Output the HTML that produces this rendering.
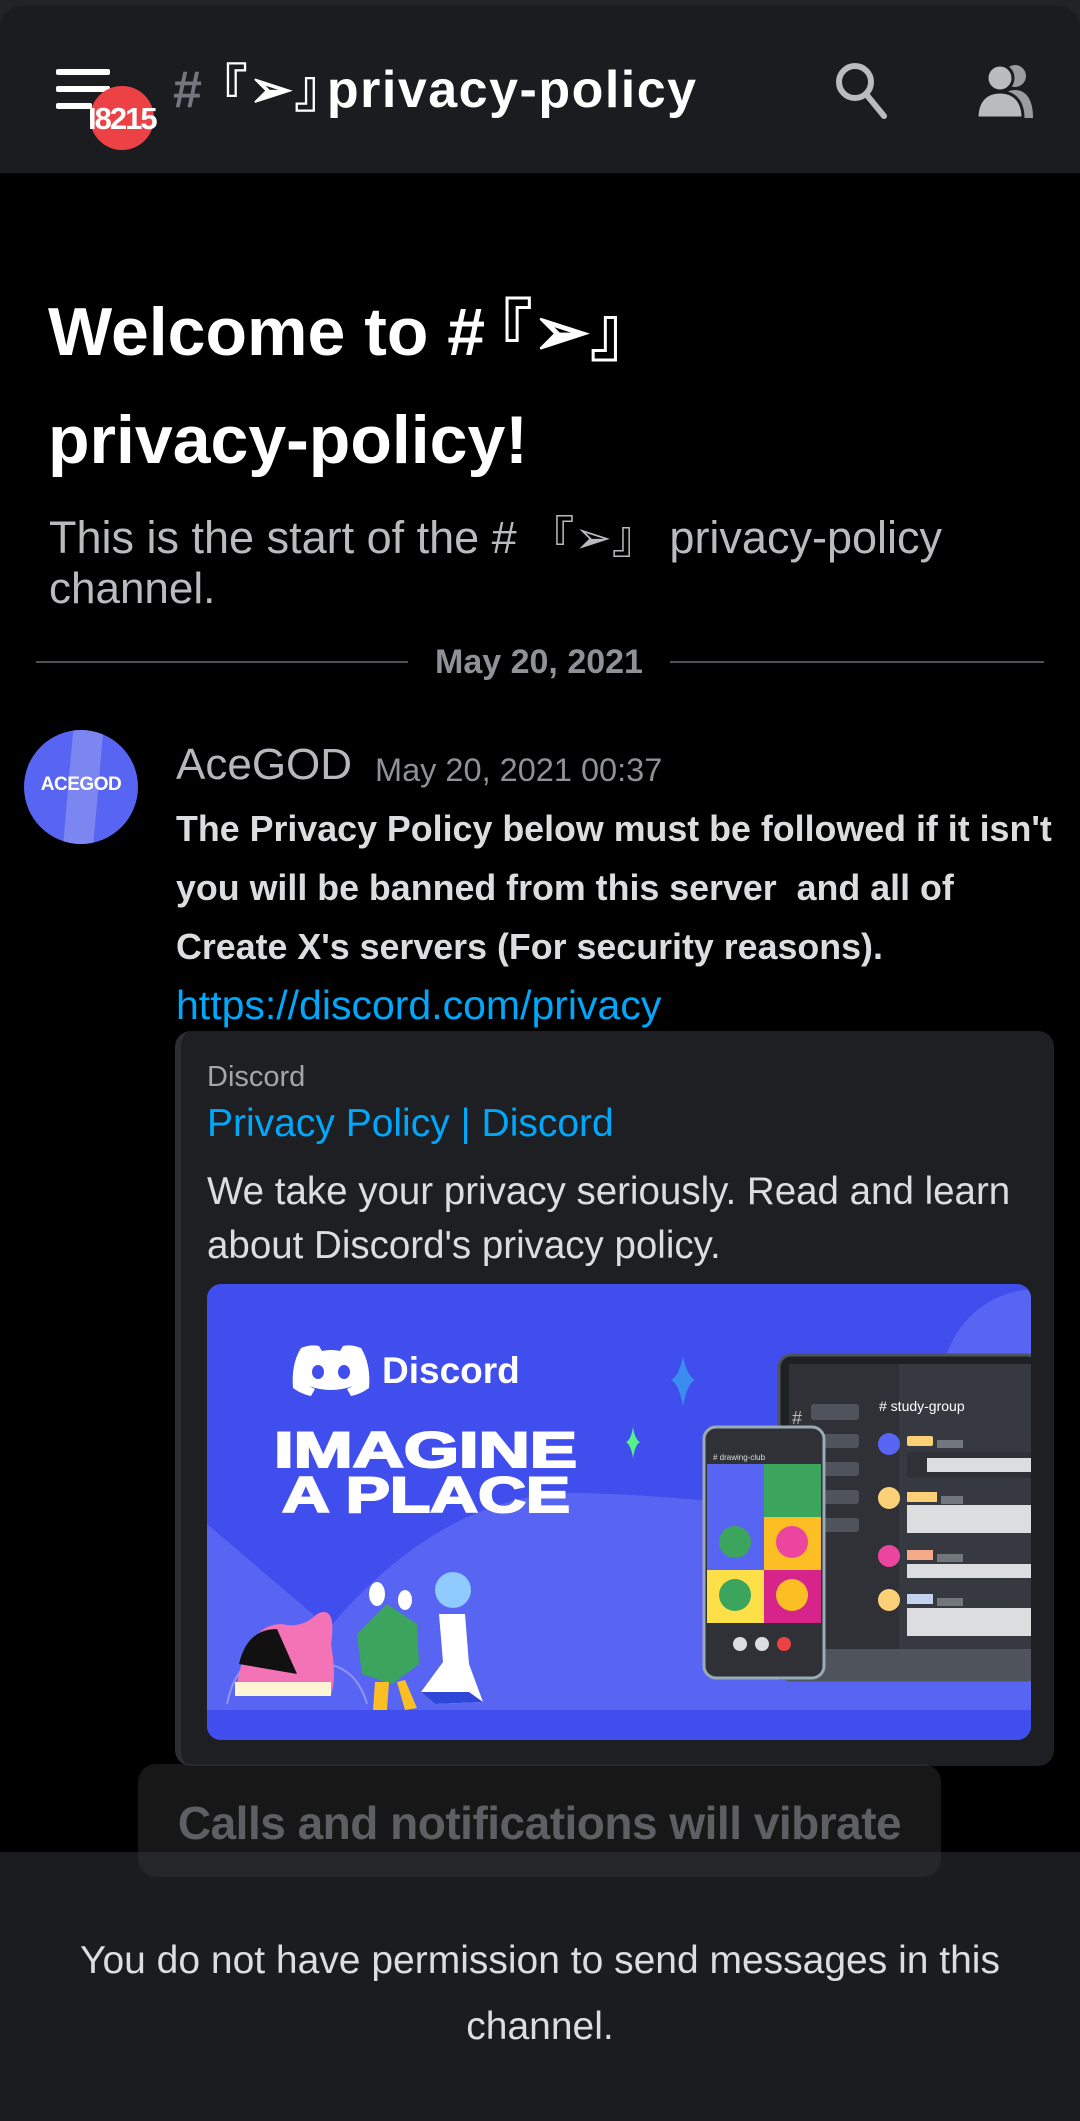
<!DOCTYPE html>
<html><head><meta charset="utf-8">
<style>
*{margin:0;padding:0;box-sizing:border-box}
html,body{width:1080px;height:2121px;background:#000;overflow:hidden;font-family:"Liberation Sans","Noto Sans CJK JP",sans-serif;color:#dcddde}
.a{position:absolute;white-space:nowrap}
.o{margin-left:-.4em}.c{margin-right:-.4em}
</style></head><body>
<div class="a" style="left:0;top:0;width:1080px;height:30px;background:#222327"></div>
<div class="a" style="left:0;top:6px;width:1080px;height:167px;background:#1b1c20;border-radius:22px 22px 0 0"></div>
<div class="a" style="left:56px;top:69px;width:54px;height:6px;background:#fff;border-radius:2px"></div>
<div class="a" style="left:56px;top:86px;width:54px;height:6px;background:#fff;border-radius:2px"></div>
<div class="a" style="left:56px;top:103px;width:36px;height:6px;background:#fff;border-radius:2px"></div>
<div class="a" style="left:90px;top:86px;width:64px;height:64px;border-radius:50%;background:#ed4245"></div>
<div class="a" style="left:88px;top:101px;font-size:31px;font-weight:bold;color:#fff;letter-spacing:-2px">I8215</div>
<div class="a" style="left:173px;top:60px;font-size:52px;line-height:60px;font-weight:bold"><span style="color:#72767d">#</span> <span style="color:#fff;letter-spacing:1.5px"><span class="o">『</span>➢<span class="c">』</span>privacy-policy</span></div>
<svg class="a" style="left:832px;top:60px" width="60" height="60" viewBox="0 0 60 60"><circle cx="23" cy="22" r="16" fill="none" stroke="#b9bbbe" stroke-width="6"/><line x1="34" y1="34" x2="52" y2="56" stroke="#b9bbbe" stroke-width="6" stroke-linecap="round"/></svg>
<svg class="a" style="left:975px;top:62px" width="64" height="56" viewBox="0 0 64 56"><circle cx="40" cy="14" r="11" fill="#9a9ca0"/><path d="M22 56 C22 36 30 28 40 28 C50 28 58 36 58 56Z" fill="#9a9ca0"/><circle cx="25" cy="16" r="13" fill="#b9bbbe" stroke="#1b1c20" stroke-width="3"/><path d="M2 56 C2 38 12 30 25 30 C38 30 48 38 48 56Z" fill="#b9bbbe" stroke="#1b1c20" stroke-width="3"/></svg>

<div class="a" style="left:48px;top:276px;font-size:68px;font-weight:bold;color:#fff">Welcome to #<span class="o" style="margin-left:-.3em">『</span>➢』</div>
<div class="a" style="left:48px;top:401px;font-size:68px;font-weight:bold;color:#fff">privacy-policy!</div>
<div class="a" style="left:49px;top:501px;font-size:45px;color:#b9bbbe">This is the start of the # 『➢』 privacy-policy</div>
<div class="a" style="left:49px;top:564px;font-size:44px;color:#b9bbbe">channel.</div>
<div class="a" style="left:36px;top:661px;width:372px;height:2px;background:#4f5156"></div>
<div class="a" style="left:670px;top:661px;width:374px;height:2px;background:#4f5156"></div>
<div class="a" style="left:420px;top:643px;width:238px;text-align:center;font-size:34px;font-weight:bold;color:#8e9297">May 20, 2021</div>

<div class="a" style="left:24px;top:730px;width:114px;height:114px;border-radius:50%;background:#5865f2;overflow:hidden">
 <div style="position:absolute;left:44px;top:-10px;width:30px;height:140px;background:#7b86f0;transform:rotate(5deg)"></div>
 <div style="position:absolute;left:0;top:44px;width:114px;text-align:center;font-size:19px;font-weight:bold;color:#fff;letter-spacing:-0.5px">ACEGOD</div>
</div>
<div class="a" style="left:176px;top:740px;font-size:44px;color:#b5b8bc">AceGOD</div>
<div class="a" style="left:375px;top:752px;font-size:32.5px;color:#8e9297">May 20, 2021 00:37</div>
<div class="a" style="left:176px;top:800px;font-size:35.8px;font-weight:bold;color:#dcddde;line-height:59px">The Privacy Policy below must be followed if it isn't<br>you will be banned from this server&nbsp; and all of<br>Create X's servers (For security reasons).</div>
<div class="a" style="left:176px;top:982px;font-size:41px;color:#00a8fc">https://discord.com/privacy</div>

<div class="a" style="left:175px;top:1031px;width:879px;height:735px;background:#1e1f23;border-radius:16px;border-left:6px solid #2c2e33"></div>
<div class="a" style="left:207px;top:1061px;font-size:29px;color:#a3a6aa">Discord</div>
<div class="a" style="left:207px;top:1102px;font-size:39px;color:#00a8fc">Privacy Policy | Discord</div>
<div class="a" style="left:207px;top:1165px;font-size:38.5px;color:#dcddde;line-height:54px">We take your privacy seriously. Read and learn<br>about Discord's privacy policy.</div>

<svg class="a" style="left:207px;top:1284px" width="824" height="456" viewBox="0 0 824 456">
 <defs><clipPath id="c"><rect width="824" height="456" rx="14"/></clipPath></defs>
 <g clip-path="url(#c)">
 <rect width="824" height="456" fill="#404eed"/>
 <circle cx="830" cy="100" r="95" fill="#5865f2"/>
 <path d="M0 240 L122 344 Q240 205 377 209 Q580 215 824 270 L824 456 L0 456Z" fill="#5865f2"/>
 <path d="M20 420 Q30 370 70 372 Q90 350 120 380 Q150 385 160 420" fill="none" stroke="#8c95f5" stroke-width="2"/>
 <rect x="0" y="426" width="824" height="30" fill="#404eed"/>
 <path d="M94 64 Q104 60 112 62 L115 67 Q124 65 133 67 L136 62 Q144 60 154 64 Q164 80 162 104 Q154 110 144 112 L140 105 L146 102 Q124 110 102 102 L108 105 L104 112 Q94 110 86 104 Q84 80 94 64Z" fill="#fff"/>
 <ellipse cx="111" cy="88" rx="6" ry="7" fill="#404eed"/><ellipse cx="137" cy="88" rx="6" ry="7" fill="#404eed"/>
 <text x="175" y="99" font-family="Liberation Sans" font-weight="bold" font-size="37" fill="#fff">Discord</text>
 <text x="67" y="183" font-family="Liberation Sans" font-weight="900" font-size="50" fill="#fff" stroke="#fff" stroke-width="2" textLength="303" lengthAdjust="spacingAndGlyphs">IMAGINE</text>
 <text x="75" y="228" font-family="Liberation Sans" font-weight="900" font-size="50" fill="#fff" stroke="#fff" stroke-width="2" textLength="288" lengthAdjust="spacingAndGlyphs">A PLACE</text>
 <path d="M476 72 Q480 92 488 96 Q480 100 476 122 Q472 100 464 96 Q472 92 476 72Z" fill="#3b8cf0"/>
 <path d="M426 143 Q428 156 433 158 Q428 161 426 174 Q424 161 419 158 Q424 156 426 143Z" fill="#57f287"/>
 <rect x="572" y="71" width="260" height="325" rx="12" fill="#1e2124" stroke="#4f545c" stroke-width="3"/>
 <rect x="582" y="80" width="110" height="285" fill="#2f3136"/>
 <rect x="692" y="80" width="140" height="285" fill="#36393f"/>
 <rect x="572" y="365" width="260" height="31" fill="#4f545c"/>
 <text x="585" y="140" font-family="Liberation Sans" font-size="18" fill="#b9bbbe">#</text>
 <rect x="604" y="120" width="48" height="16" rx="3" fill="#4f545c"/>
 <rect x="604" y="150" width="48" height="14" rx="3" fill="#4f545c"/><rect x="604" y="178" width="48" height="14" rx="3" fill="#4f545c"/><rect x="604" y="206" width="48" height="14" rx="3" fill="#4f545c"/><rect x="604" y="234" width="48" height="14" rx="3" fill="#4f545c"/>
 <text x="672" y="127" font-family="Liberation Sans" font-size="14" fill="#fff"># study-group</text>
 <circle cx="682" cy="160" r="11" fill="#5865f2"/><rect x="700" y="152" width="26" height="10" rx="2" fill="#fcd077"/><rect x="730" y="156" width="26" height="8" fill="#72767d"/>
 <rect x="700" y="168" width="132" height="26" rx="3" fill="#2f3136"/><rect x="720" y="174" width="112" height="14" fill="#dcddde"/>
 <circle cx="682" cy="214" r="11" fill="#fcd077"/><rect x="700" y="208" width="30" height="10" fill="#fcd077"/><rect x="734" y="212" width="22" height="8" fill="#72767d"/><rect x="700" y="221" width="132" height="28" fill="#dcddde"/>
 <circle cx="682" cy="272" r="11" fill="#eb459e"/><rect x="700" y="266" width="26" height="10" fill="#f4a988"/><rect x="730" y="270" width="26" height="8" fill="#72767d"/><rect x="700" y="280" width="132" height="14" fill="#dcddde"/>
 <circle cx="682" cy="316" r="11" fill="#fcd077"/><rect x="700" y="310" width="26" height="10" fill="#c5d3f0"/><rect x="730" y="314" width="26" height="8" fill="#72767d"/><rect x="700" y="324" width="132" height="28" fill="#dcddde"/>
 <rect x="497" y="143" width="120" height="251" rx="12" fill="#2f3136" stroke="#99aab5" stroke-width="3"/>
 <text x="506" y="176" font-family="Liberation Sans" font-size="8" fill="#dcddde"># drawing-club</text>
 <rect x="500" y="180" width="57" height="53" fill="#5865f2"/><rect x="557" y="180" width="57" height="53" fill="#3ba55d"/>
 <rect x="500" y="233" width="57" height="53" fill="#5865f2"/><rect x="557" y="233" width="57" height="53" fill="#fbbf24"/>
 <rect x="500" y="286" width="57" height="53" fill="#fde047"/><rect x="557" y="286" width="57" height="53" fill="#d6248a"/>
 <circle cx="528" cy="258" r="16" fill="#3ba55d"/><circle cx="585" cy="258" r="16" fill="#eb459e"/><circle cx="528" cy="311" r="16" fill="#3ba55d"/><circle cx="585" cy="311" r="16" fill="#fbbf24"/>
 <circle cx="533" cy="360" r="7" fill="#dcddde"/><circle cx="555" cy="360" r="7" fill="#dcddde"/><circle cx="577" cy="360" r="7" fill="#ed4245"/>
 <path d="M30 400 Q40 340 75 340 Q95 345 110 330 Q130 320 124 360 Q130 395 124 410 L30 412Z" fill="#f472b6"/>
 <path d="M32 380 Q40 345 70 345 L90 390 Z" fill="#111"/>
 <rect x="28" y="398" width="96" height="14" fill="#fff4d6"/>
 <path d="M150 350 L180 320 L210 340 L212 380 L185 400 L155 390Z" fill="#3ba55d"/>
 <ellipse cx="170" cy="310" rx="8" ry="12" fill="#fff"/><ellipse cx="198" cy="316" rx="7" ry="10" fill="#fff"/>
 <path d="M168 398 L166 426 L180 426 L182 398 M190 398 L198 426 L210 424 L198 396" fill="#fbbf24"/>
 <circle cx="246" cy="306" r="18" fill="#8fcbff"/>
 <path d="M232 330 L258 330 L262 380 L276 418 L228 420 L214 408 L236 378Z" fill="#fff"/>
 <path d="M214 408 L228 420 L276 418 L262 408Z" fill="#2f46d8"/>
 </g>
</svg>

<div class="a" style="left:0;top:1852px;width:1080px;height:269px;background:#1b1c20"></div>
<div class="a" style="left:138px;top:1764px;width:803px;height:113px;border-radius:18px;background:rgba(50,51,54,0.45)"></div>
<div class="a" style="left:138px;top:1796px;width:803px;text-align:center;font-size:46px;font-weight:bold;color:#5d5f63;letter-spacing:-0.5px">Calls and notifications will vibrate</div>
<div class="a" style="left:0;top:1928px;width:1080px;text-align:center;font-size:39px;color:#dcddde;line-height:66px;white-space:normal">You do not have permission to send messages in this<br>channel.</div>
</body></html>
